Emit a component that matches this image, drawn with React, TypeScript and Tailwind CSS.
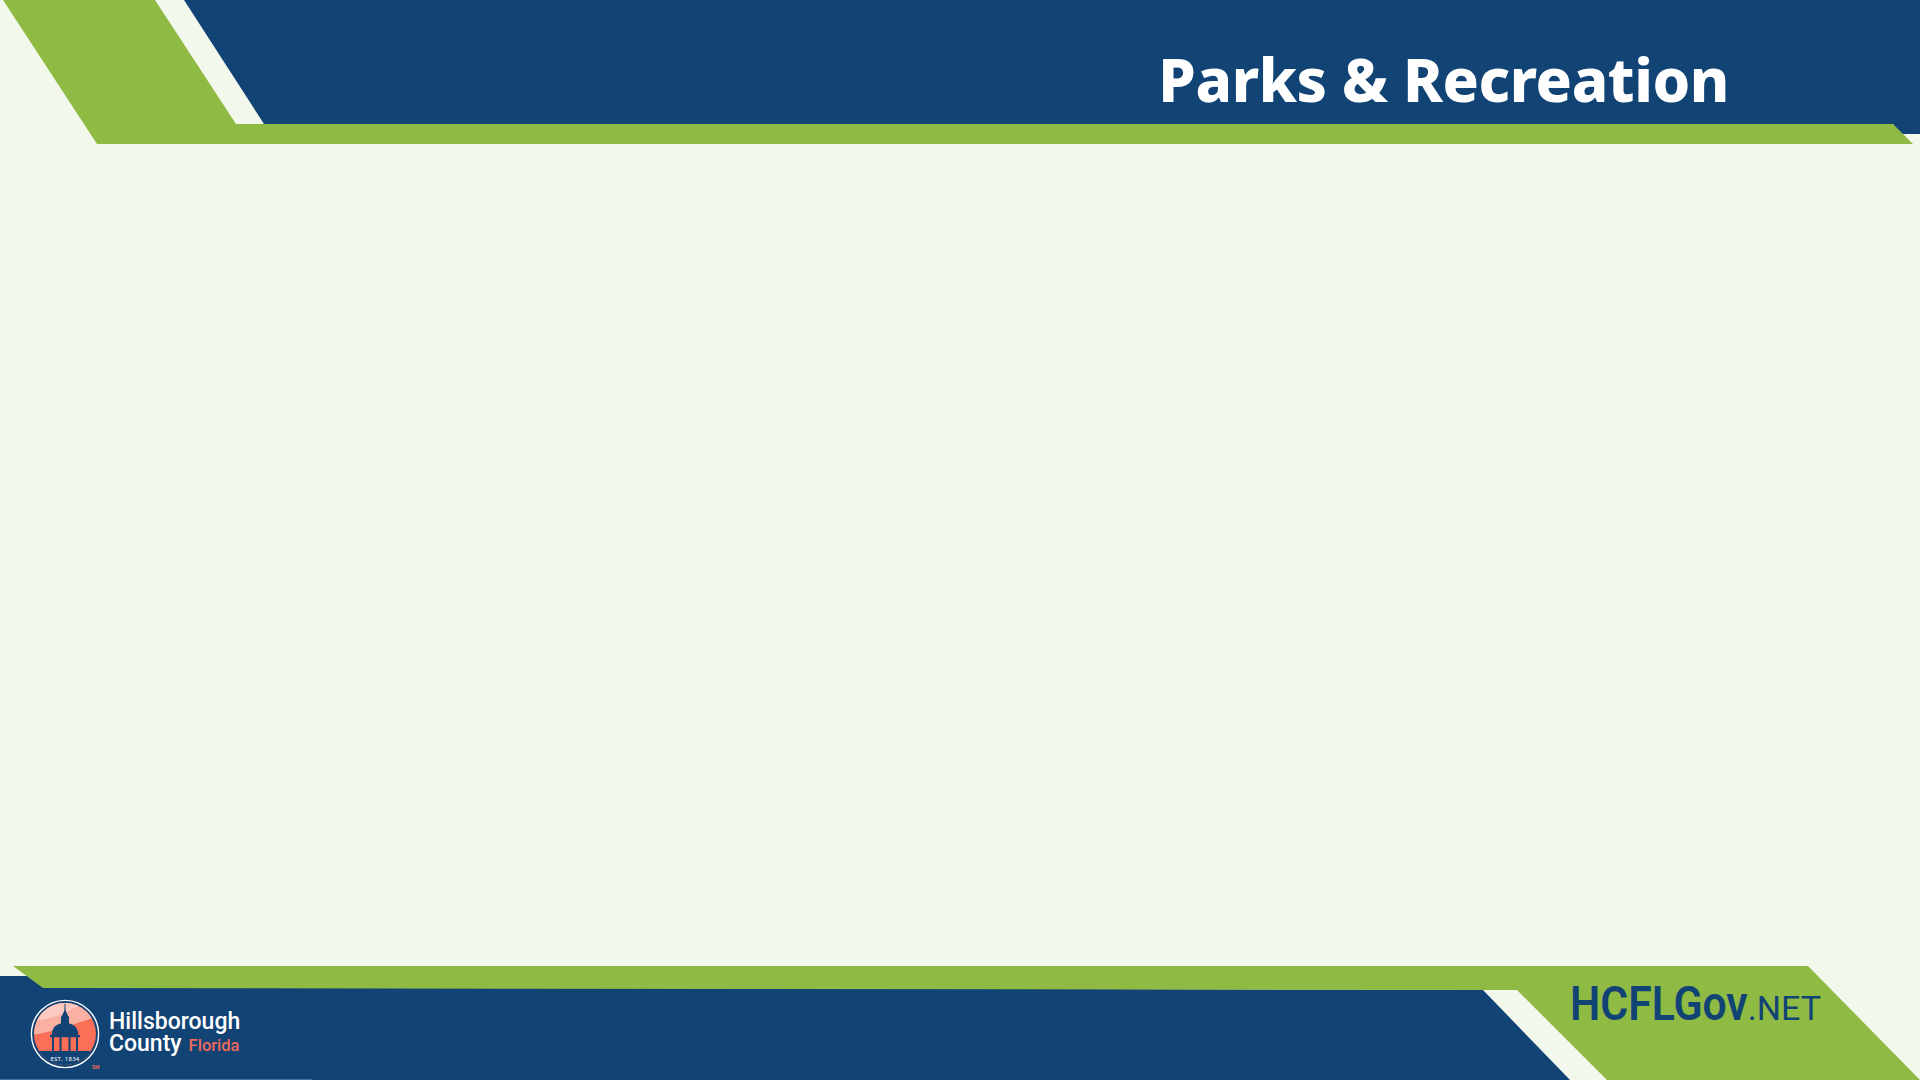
function CountySeal() {
  return (
    <svg width="70" height="70" viewBox="0 0 70 70" className="shrink-0">
      <defs>
        <clipPath id="disc">
          <circle cx="35" cy="35" r="31" />
        </clipPath>
      </defs>
      <circle cx="35" cy="35" r="33.6" fill="none" stroke="#fff" strokeWidth="1.4" />
      <g clipPath="url(#disc)">
        <rect width="70" height="70" fill="#fb6f58" />
        <path d="M0 36C20 34 44 26 70 16V0H0Z" fill="#fbb0a4" />
        <path d="M0 22C20 21 38 15 58 0H0Z" fill="#fdc9c0" />
        <rect y="52" width="70" height="18" fill="#114375" />
      </g>
      {/* dome */}
      <g fill="#114375">
        <rect x="34.5" y="5" width="1" height="6" />
        <path d="M35 10L38.5 18H31.5Z" />
        <rect x="31" y="17.5" width="8" height="7.5" />
        <path d="M21.7 36.5C21.7 28 27 24 35 24S48.3 28 48.3 36.5Z" />
        <rect x="20" y="36" width="30" height="2.2" />
        <rect x="22" y="37" width="2" height="15" />
        <rect x="29.5" y="37" width="2" height="15" />
        <rect x="38.5" y="37" width="2" height="15" />
        <rect x="46" y="37" width="2" height="15" />
      </g>
      <text x="35" y="62" textAnchor="middle" fill="#fff" fontSize="6" fontFamily="'Noto Sans', sans-serif" letterSpacing=".3">
        EST. 1834
      </text>
    </svg>
  );
}

export default function App() {
  return (
    <div className="h-screen w-full flex flex-col overflow-hidden bg-[#f3f8ed] font-['Roboto',sans-serif]">
      <header className="relative h-[144px] shrink-0 flex justify-end">
        <div className="absolute inset-0 bg-[#114375] [clip-path:polygon(184px_0,1920px_0,1920px_134px,1900px_134px,1893px_124px,264px_124px)]" />
        <div className="absolute inset-0 bg-[#8fba43] [clip-path:polygon(3px_0,155px_0,236px_124px,1893px_124px,1913px_144px,97px_144px)]" />
        <h1 className="relative pr-[191px] pt-[38px] font-['Noto_Sans',sans-serif] text-[60px] leading-[82px] font-extrabold tracking-[-0.4px] text-white h-fit">
          Parks &amp; Recreation
        </h1>
      </header>

      <main className="flex-1" />

      <footer className="relative h-[114px] shrink-0 flex justify-between">
        <div className="absolute inset-0 bg-[#114375] [clip-path:polygon(0_10px,100px_10px,100px_20px,1483px_24px,1570px_114px,0_114px)]" />
        <div className="absolute inset-0 bg-[#8fba43] [clip-path:polygon(13px_0,1808px_0,1920px_114px,1607px_114px,1517px_24px,43px_22px)]" />
        <div className="absolute bottom-0 left-0 w-[312px] h-px bg-[#4a7199]" />

        <div className="relative flex items-start gap-[9px] pl-[30px] pt-[33px]">
          <CountySeal />
          <div className="pt-[12px] text-white text-[23px] leading-[22px] font-medium">
            <div>Hillsborough</div>
            <div className="flex items-baseline gap-[7px]">
              County
              <span className="text-[16.5px] text-[#f0695a]">Florida</span>
            </div>
          </div>
          <span className="absolute left-[92px] top-[99px] text-[5px] leading-none font-bold text-[#f0695a]">SM</span>
        </div>

        <div className="relative pr-[99px] pt-[14px] h-fit flex items-baseline text-[#114375] leading-[48px]">
          <span className="text-[48px] font-semibold origin-right scale-x-[.89]">HCFLGov</span>
          <span className="text-[34px] font-normal">.NET</span>
        </div>
      </footer>
    </div>
  );
}
